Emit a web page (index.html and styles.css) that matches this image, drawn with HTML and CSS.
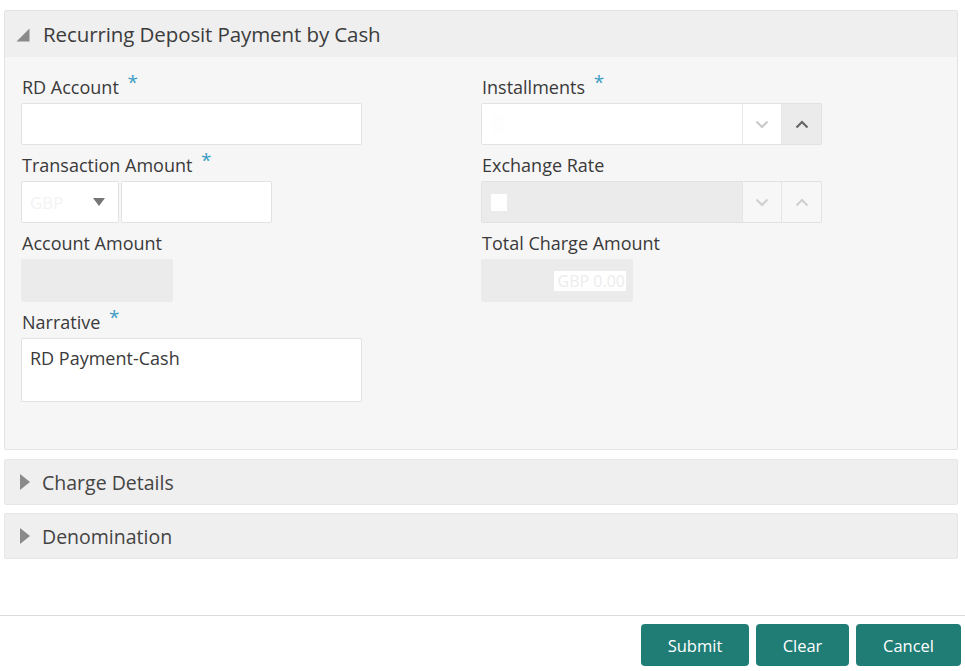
FILE: index.html
```html
<!DOCTYPE html>
<html lang="en">
<head>
<meta charset="utf-8">
<title>Recurring Deposit Payment by Cash</title>
<link rel="stylesheet" href="styles.css">
</head>
<body>
<div class="page">
  <div class="content">
    <section class="panel open">
      <div class="panel-head">
        <svg class="tri-open" width="14" height="14" viewBox="0 0 14 14"><polygon points="13.5,0.5 13.5,13.5 0.5,13.5" fill="#8a8a8a"/></svg>
        <span class="panel-title">Recurring Deposit Payment by Cash</span>
      </div>
      <div class="panel-body">
        <div class="grid">
          <div class="field">
            <div class="label">RD Account <span class="req">*</span></div>
            <div class="input w340"></div>
          </div>
          <div class="field">
            <div class="label">Installments <span class="req">*</span></div>
            <div class="spin">
              <div class="spin-val"><span class="ghost"></span></div>
              <div class="spin-btn down"><svg width="14" height="9" viewBox="0 0 14 9"><polyline points="1.5,1.5 7,7 12.5,1.5" fill="none" stroke="#c9c9c9" stroke-width="2"/></svg></div>
              <div class="spin-btn up active"><svg width="14" height="9" viewBox="0 0 14 9"><polyline points="1.5,7.5 7,2 12.5,7.5" fill="none" stroke="#666" stroke-width="2.2"/></svg></div>
            </div>
          </div>
          <div class="field">
            <div class="label">Transaction Amount <span class="req">*</span></div>
            <div class="amount-row">
              <div class="select"><span class="faint">GBP</span><svg width="12" height="8" viewBox="0 0 12 8"><polygon points="0,0 12,0 6,8" fill="#767676"/></svg></div>
              <div class="input w150"></div>
            </div>
          </div>
          <div class="field">
            <div class="label">Exchange Rate</div>
            <div class="spin disabled">
              <div class="spin-val"><span class="ghost white"></span></div>
              <div class="spin-btn down"><svg width="14" height="9" viewBox="0 0 14 9"><polyline points="1.5,1.5 7,7 12.5,1.5" fill="none" stroke="#cfcfcf" stroke-width="2"/></svg></div>
              <div class="spin-btn up"><svg width="14" height="9" viewBox="0 0 14 9"><polyline points="1.5,7.5 7,2 12.5,7.5" fill="none" stroke="#cfcfcf" stroke-width="2"/></svg></div>
            </div>
          </div>
          <div class="field">
            <div class="label">Account Amount</div>
            <div class="readonly w151"></div>
          </div>
          <div class="field">
            <div class="label">Total Charge Amount</div>
            <div class="readonly w151 right"><span class="value-chip">GBP 0.00</span></div>
          </div>
          <div class="field">
            <div class="label">Narrative <span class="req">*</span></div>
            <div class="textarea w340">RD Payment-Cash</div>
          </div>
        </div>
      </div>
    </section>

    <section class="panel closed">
      <div class="panel-head">
        <svg class="tri-closed" width="10" height="16" viewBox="0 0 10 16"><polygon points="0,0 10,8 0,16" fill="#8a8a8a"/></svg>
        <span class="panel-sub">Charge Details</span>
      </div>
    </section>

    <section class="panel closed second">
      <div class="panel-head">
        <svg class="tri-closed" width="10" height="16" viewBox="0 0 10 16"><polygon points="0,0 10,8 0,16" fill="#8a8a8a"/></svg>
        <span class="panel-sub">Denomination</span>
      </div>
    </section>
  </div>

  <footer class="footer">
    <button class="btn btn-submit">Submit</button>
    <button class="btn btn-clear">Clear</button>
    <button class="btn btn-cancel">Cancel</button>
  </footer>
</div>
</body>
</html>
```

FILE: styles.css
```css
* { box-sizing: border-box; }
html, body { margin: 0; padding: 0; background: #ffffff; }
body {
  font-family: "Open Sans", "Noto Sans", "Liberation Sans", sans-serif;
  color: #3a3a3a;
  width: 965px;
  height: 671px;
  overflow: hidden;
}
.page { display: flex; flex-direction: column; height: 671px; }
.content { padding: 10px 7px 0 4px; }

.panel {
  border: 1px solid #e3e3e3;
  border-radius: 2px;
  background: #f6f6f6;
}
.panel.open .panel-head {
  height: 46px;
  background: #efefef;
  display: flex;
  align-items: center;
  padding-left: 11px;
  gap: 13px;
}
.tri-open { margin-top: 2px; }
.panel-title { font-size: 20.5px; color: #3c3c3c; letter-spacing: -0.1px; }

.panel-body { padding: 10px 0 47px 16px; }
.grid {
  display: grid;
  grid-template-columns: 460px 1fr;
}
.field { display: flex; flex-direction: column; align-items: flex-start; }
.label {
  font-size: 18px;
  line-height: 24px;
  height: 24px;
  margin: 8px 0 4px 1px;
  color: #3a3a3a;
  white-space: nowrap;
}
.req { color: #3c9dc4; font-size: 19px; line-height: 0; position: relative; top: -5px; margin-left: 4px; }

.input {
  height: 42px;
  background: #fff;
  border: 1px solid #e2e2e2;
  border-radius: 2px;
}
.w340 { width: 341px; }
.w150 { width: 151px; }
.w151 { width: 152px; }

.spin { display: flex; height: 42px; width: 341px; border: 1px solid #e2e2e2; border-radius: 2px; background: #fff; }
.spin-val { flex: 1; display: flex; align-items: center; padding-left: 9px; }
.ghost { width: 14px; height: 20px; background: #fefefe; }
.spin-btn { width: 39px; display: flex; align-items: center; justify-content: center; border-left: 1px solid #e6e6e6; }
.spin-btn.up { width: 40px; }
.spin-btn.active { background: #ebebeb; }
.spin.disabled { background: #f7f7f7; }
.spin.disabled .spin-val { background: #ebebeb; }
.ghost.white { width: 16px; height: 17px; background: #ffffff; }

.amount-row { display: flex; gap: 2px; }
.select {
  width: 98px;
  height: 42px;
  background: #fff;
  border: 1px solid #e2e2e2;
  border-radius: 2px;
  display: flex;
  align-items: center;
  justify-content: space-between;
  padding: 0 13px 0 8px;
}
.faint { color: #f3f3f3; font-size: 17px; }

.readonly {
  height: 43px;
  background: #ebebeb;
  border-radius: 2px;
  display: flex;
  align-items: center;
}
.readonly.right { justify-content: flex-end; padding-right: 7px; }
.value-chip {
  background: #fff;
  color: #ececec;
  font-size: 16px;
  line-height: 20px;
  width: 72px;
  text-align: right;
  padding-right: 1px;
}

.textarea {
  height: 64px;
  background: #fff;
  border: 1px solid #e2e2e2;
  border-radius: 2px;
  padding: 6px 8px;
  font-size: 18px;
  line-height: 26px;
  color: #3a3a3a;
}

.panel.closed { margin-top: 9px; background: #efefef; border-color: #e6e6e6; }
.panel.closed.second { margin-top: 8px; }
.panel.closed .panel-head {
  height: 44px;
  display: flex;
  align-items: center;
  padding-left: 15px;
  gap: 12px;
}
.panel-sub { font-size: 19.5px; color: #444; }

.footer {
  margin-top: auto;
  border-top: 1px solid #dcdcdc;
  height: 56px;
  display: flex;
  justify-content: flex-end;
  align-items: flex-start;
  padding: 8px 4px 0 0;
  gap: 7px;
}
.btn {
  height: 42px;
  border: none;
  border-radius: 4px;
  background: #1f7d76;
  color: #fff;
  font-family: "Open Sans", "Noto Sans", "Liberation Sans", sans-serif;
  font-size: 16.5px;
  padding: 0;
}
.btn-submit { width: 108px; }
.btn-clear { width: 93px; }
.btn-cancel { width: 105px; }
```
